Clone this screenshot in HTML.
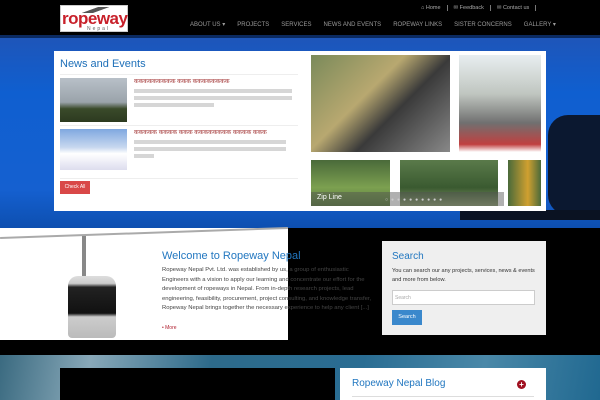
<!DOCTYPE html>
<html><head><meta charset="utf-8"><style>
*{margin:0;padding:0;box-sizing:border-box}
body{width:600px;height:400px;overflow:hidden;background:#000;font-family:"Liberation Sans",sans-serif;position:relative}
.a{position:absolute}
.nav span{color:#9a9a9a;font-size:6px;margin-left:12px}
.top span{color:#aaa;font-size:5.5px;margin-left:6px;padding-right:6px;border-right:1px solid #777}
.bar{height:4px;background:#8a6060;margin-bottom:3px;opacity:.6}
</style></head><body>
<div class="a" style="left:0;top:0;width:600px;height:35px;background:#000"></div>
<div class="a" style="left:60px;top:5px;width:68px;height:27px;background:#fff;border:1px solid #ccc">
 <div class="a" style="left:14px;top:1px;width:40px;height:6px;background:linear-gradient(160deg,transparent 40%,#555 42%,#555 60%,transparent 62%)"></div>
 <div class="a" style="left:1px;top:3px;font:bold 17px 'Liberation Sans',sans-serif;color:#c8202a;letter-spacing:-0.5px">ropeway</div>
 <div class="a" style="left:26px;top:20px;font-size:5px;color:#666;letter-spacing:2px">Nepal</div>
</div>
<div class="a top" style="left:415px;top:1px;white-space:nowrap;line-height:7px"><span>⌂ Home</span><span>✉ Feedback</span><span>✉ Contact us</span></div>
<div class="a nav" style="left:178px;top:18px;white-space:nowrap;line-height:7px"><span>ABOUT US ▾</span><span>PROJECTS</span><span>SERVICES</span><span>NEWS AND EVENTS</span><span>ROPEWAY LINKS</span><span>SISTER CONCERNS</span><span>GALLERY ▾</span></div>
<div class="a" style="left:0;top:35px;width:600px;height:193px;background:linear-gradient(180deg,#1f55b8 0%,#0f5fd0 30%,#1560d0 80%,#0d4fb0 100%)"></div>
<div class="a" style="left:0;top:35px;width:600px;height:3px;background:#0b2a60"></div>
<div class="a" style="left:548px;top:115px;width:52px;height:100px;background:#0b1830;border-radius:20px 0 0 20px"></div>
<div class="a" style="left:460px;top:210px;width:140px;height:10px;background:#0a1222"></div>
<div class="a" style="left:54px;top:51px;width:251px;height:160px;background:#fff">
 <div class="a" style="left:6px;top:7px;color:#1d6fb8;font-size:11px">News and Events</div>
 <div class="a" style="left:6px;top:23px;width:238px;height:1px;background:#eee"></div>
 <div class="a" style="left:6px;top:27px;width:67px;height:44px;background:linear-gradient(180deg,#b8c0c8 0%,#9aa3aa 55%,#3a4a2a 70%,#2c3a20 100%)"></div>
 <div class="a" style="left:80px;top:26px;width:160px"><div style="color:#a03030;font-size:6px;margin-bottom:4px">ककककककककक ककक कककककककक</div>
 <div class="bar" style="width:158px;background:#bbb"></div><div class="bar" style="width:158px;background:#bbb"></div><div class="bar" style="width:80px;background:#bbb"></div></div>
 <div class="a" style="left:6px;top:74px;width:238px;height:1px;background:#eee"></div>
 <div class="a" style="left:6px;top:78px;width:67px;height:41px;background:linear-gradient(180deg,#7fa8e0 0%,#c8d8ef 45%,#fff 60%,#dde 100%)"></div>
 <div class="a" style="left:80px;top:77px;width:160px"><div style="color:#a03030;font-size:6px;margin-bottom:4px">ककककक कककक ककक कककककककक कककक ककक</div>
 <div class="bar" style="width:152px;background:#bbb"></div><div class="bar" style="width:152px;background:#bbb"></div><div class="bar" style="width:20px;background:#bbb"></div></div>
 <div class="a" style="left:6px;top:127px;width:238px;height:1px;background:#eee"></div>
 <div class="a" style="left:6px;top:130px;width:30px;height:13px;background:#d94848;color:#fff;font-size:5px;text-align:center;line-height:13px">Check All</div>
</div>
<div class="a" style="left:305px;top:51px;width:241px;height:160px;background:#fff">
 <div class="a" style="left:6px;top:4px;width:139px;height:97px;background:linear-gradient(135deg,#7a8a5a,#b8a870 40%,#3a3a3a 60%,#888 100%)"></div>
 <div class="a" style="left:154px;top:4px;width:82px;height:97px;background:linear-gradient(180deg,#e8eef0 0%,#c0c6c0 40%,#707070 70%,#c04040 92%,#fff 100%)"></div>
 <div class="a" style="left:6px;top:109px;width:79px;height:46px;background:linear-gradient(180deg,#4a6a3a,#7ca050 60%,#5a7a40)"></div>
 <div class="a" style="left:95px;top:109px;width:98px;height:46px;background:linear-gradient(180deg,#5a7a4a,#3a5a30 60%,#8a9a70)"></div>
 <div class="a" style="left:203px;top:109px;width:33px;height:46px;background:linear-gradient(90deg,#4a6a3a,#d0a030 60%,#4a6a3a)"></div>
 <div class="a" style="left:6px;top:141px;width:193px;height:14px;background:rgba(80,80,80,.45)"></div>
 <div class="a" style="left:12px;top:143px;color:#fff;font-size:7px">Zip Line</div>
 <div class="a" style="left:80px;top:146px;color:#ccc;font-size:5px;letter-spacing:3px">○●●●●●●●●●</div>
</div>
<div class="a" style="left:0;top:228px;width:600px;height:127px;background:#000"></div>
<div class="a" style="left:0;top:228px;width:288px;height:112px;background:#fff"></div>
<div class="a" style="left:0;top:232px;width:288px;height:2px;background:#aaa;transform:rotate(-2deg)"></div>
<div class="a" style="left:58px;top:236px;width:70px;height:100px">
 <div class="a" style="left:24px;top:0;width:4px;height:42px;background:#888"></div>
 <div class="a" style="left:10px;top:40px;width:48px;height:62px;background:linear-gradient(180deg,#ddd 0%,#ccc 12%,#222 18%,#111 60%,#ccc 66%,#bbb 100%);border-radius:10px 10px 4px 4px"></div>
</div>
<div class="a" style="left:162px;top:250px;color:#2277c0;font-size:11px">Welcome to Ropeway Nepal</div>
<div class="a" style="left:162px;top:266px;width:210px;font-size:5.9px;line-height:9.5px;color:#444">Ropeway Nepal Pvt. Ltd. was established by us, a group of enthusiastic Engineers with a vision to apply our learning and concentrate our effort for the development of ropeways in Nepal. From in-depth research projects, lead engineering, feasibility, procurement, project consulting, and knowledge transfer, Ropeway Nepal brings together the necessary experience to help any client [...]</div>
<div class="a" style="left:162px;top:325px;color:#b02030;font-size:5px">• More</div>
<div class="a" style="left:382px;top:241px;width:164px;height:94px;background:#efefef">
 <div class="a" style="left:10px;top:10px;color:#2277c0;font-size:10px">Search</div>
 <div class="a" style="left:10px;top:26px;width:150px;font-size:5.6px;line-height:9px;color:#333">You can search our any projects, services, news &amp; events and more from below.</div>
 <div class="a" style="left:10px;top:49px;width:143px;height:15px;background:#fff;border:1px solid #ccc;font-size:5px;color:#aaa;padding:4px 2px">Search</div>
 <div class="a" style="left:10px;top:69px;width:30px;height:15px;background:#3a88cc;color:#fff;font-size:5.5px;text-align:center;line-height:15px">Search</div>
</div>
<div class="a" style="left:0;top:355px;width:600px;height:45px;background:linear-gradient(100deg,#3a6a80 0%,#88a8b8 15%,#2d6a8a 35%,#2a6d93 60%,#4a88a8 80%,#206890 100%)"></div>
<div class="a" style="left:60px;top:368px;width:275px;height:32px;background:#000"></div>
<div class="a" style="left:340px;top:368px;width:206px;height:32px;background:#fff">
 <div class="a" style="left:12px;top:10px;color:#2277c0;font-size:10px">Ropeway Nepal Blog</div>
 <div class="a" style="left:177px;top:12px;width:9px;height:9px;border-radius:50%;background:#a01020;color:#fff;font:bold 8px/9px 'Liberation Sans';text-align:center">+</div>
 <div class="a" style="left:12px;top:28px;width:182px;height:1px;background:#ddd"></div>
</div>
</body></html>
